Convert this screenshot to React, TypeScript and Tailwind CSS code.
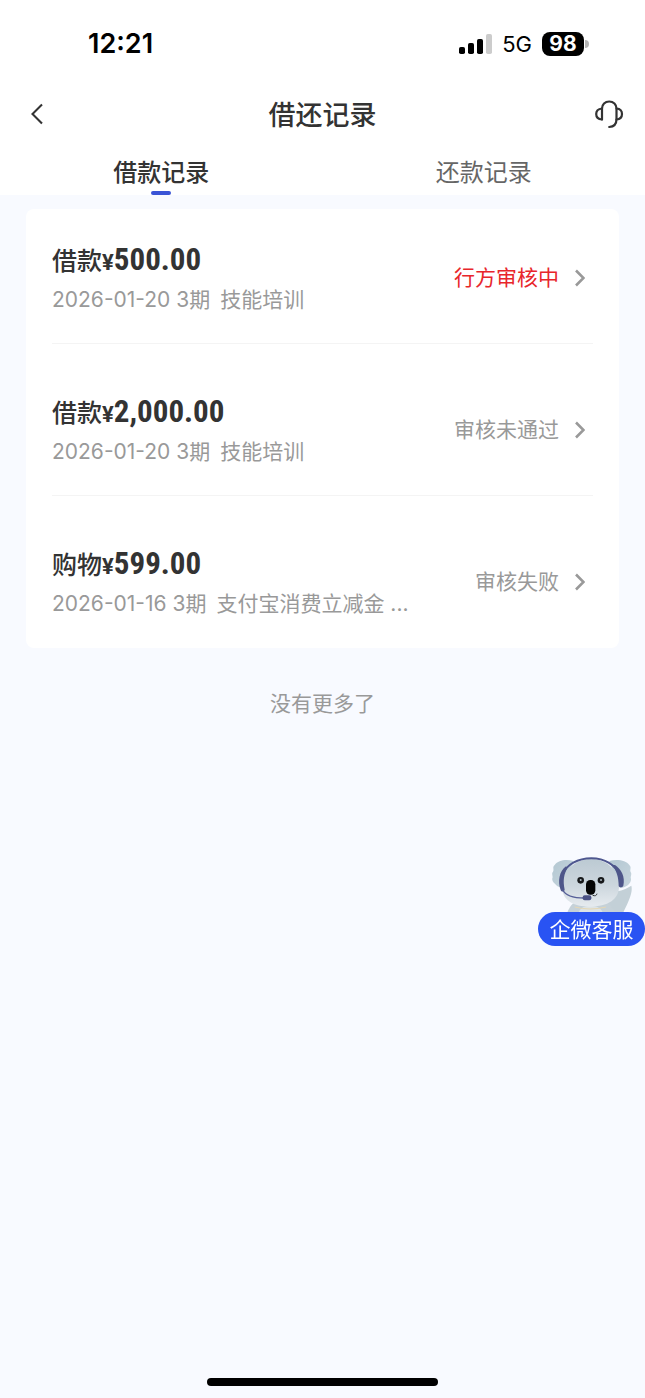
import React, { useState } from "react";
import clsx from "clsx";

type LoanRecord = {
  id: string;
  kind: string;
  amount: string;
  date: string;
  periods: string;
  purpose: string;
  status: string;
  highlight?: boolean;
};

const loanRecords: LoanRecord[] = [
  {
    id: "1",
    kind: "借款",
    amount: "500.00",
    date: "2026-01-20",
    periods: "3期",
    purpose: "技能培训",
    status: "行方审核中",
    highlight: true,
  },
  {
    id: "2",
    kind: "借款",
    amount: "2,000.00",
    date: "2026-01-20",
    periods: "3期",
    purpose: "技能培训",
    status: "审核未通过",
  },
  {
    id: "3",
    kind: "购物",
    amount: "599.00",
    date: "2026-01-16",
    periods: "3期",
    purpose: "支付宝消费立减金 ...",
    status: "审核失败",
  },
];

const tabs = [
  { key: "loan", label: "借款记录" },
  { key: "repay", label: "还款记录" },
];

function StatusBar() {
  return (
    <div className="flex h-22 items-center justify-between pr-14 pl-22 text-black">
      <span className="text-[27px] leading-8 font-semibold">12:21</span>
      <div className="flex items-center gap-2.5">
        <svg width="33" height="20" viewBox="0 0 33 20" aria-hidden="true">
          <rect x="0" y="13" width="6" height="7" rx="1.8" />
          <rect x="9" y="9" width="6" height="11" rx="1.8" />
          <rect x="18" y="5" width="6" height="15" rx="1.8" />
          <rect x="27" y="0" width="6" height="20" rx="1.8" fill="#cccccc" />
        </svg>
        <span className="text-[22px] leading-8">5G</span>
        <div className="flex items-center gap-px">
          <span className="flex h-6 w-[42px] items-center justify-center rounded-lg bg-black text-[21px] leading-6 font-bold text-white">
            98
          </span>
          <span className="h-2 w-1 rounded-r-full bg-[#b5b5b5]" />
        </div>
      </div>
    </div>
  );
}

function NavBar() {
  return (
    <header className="flex h-[52px] items-center justify-between px-5">
      <button type="button" aria-label="返回" className="flex w-8 justify-center">
        <svg width="16" height="24" viewBox="0 0 16 24" fill="none" aria-hidden="true">
          <path d="M14 2.500L4.500 12L14 21.500" stroke="#333333" strokeWidth="2.100" />
        </svg>
      </button>
      <h1 className="pt-1 text-[27px] leading-10 font-medium text-[#333333]">借还记录</h1>
      <button type="button" aria-label="客服" className="flex w-8 justify-center">
        <svg
          width="30"
          height="30"
          viewBox="0 0 30 30"
          fill="none"
          stroke="#333333"
          strokeWidth="2.200"
          strokeLinecap="round"
          aria-hidden="true"
        >
          <path d="M8 20.500V9.500C8 5.500 11 2.500 15.200 2.500C19.500 2.500 22.500 5.500 22.500 9.500V20C22.500 25 20 27.800 15.200 28" />
          <path d="M8 9.500C4.500 9.800 2.200 12 2.200 15C2.200 18 4.500 20.200 8 20.500" />
          <path d="M22.500 9.500C26 9.800 28 12 28 15C28 18 26 20.200 22.500 20.500" />
        </svg>
      </button>
    </header>
  );
}

function RecordRow({ record }: { record: LoanRecord }) {
  return (
    <li className="border-b border-[#f4f4f4] pt-[50px] pb-[29px] first:pt-[33px] last:border-transparent">
      <a href={`#record-${record.id}`} className="flex items-center justify-between">
        <div className="flex flex-col gap-2">
          <p className="flex h-9 items-baseline text-[#333333]">
            <span className="text-[25px] leading-9 font-medium">{record.kind}</span>
            <span className="font-['Roboto'] text-[22px] leading-9 font-bold">¥</span>
            <span className="font-['Roboto_Condensed','Roboto'] text-[31px] leading-9 font-bold">
              {record.amount}
            </span>
          </p>
          <p className="flex gap-2.5 text-[21px] leading-7 text-[#999999]">
            <span>
              {record.date} {record.periods}
            </span>
            <span>{record.purpose}</span>
          </p>
        </div>
        <div className="flex items-center gap-4 pr-2">
          <span
            className={clsx(
              "text-[21px] leading-7",
              record.highlight ? "text-[#e8262b]" : "text-[#999999]"
            )}
          >
            {record.status}
          </span>
          <svg width="10" height="18" viewBox="0 0 10 18" fill="none" aria-hidden="true">
            <path d="M1 1.500L8.500 9L1 16.500" stroke="#999999" strokeWidth="2.600" />
          </svg>
        </div>
      </a>
    </li>
  );
}

function Koala() {
  return (
    <svg width="80" height="55" viewBox="66 50 240 165" aria-hidden="true">
      <defs>
        <linearGradient id="koala-face" x1="0" y1="0" x2="0" y2="1">
          <stop offset="0" stopColor="#bccad3" />
          <stop offset="0.55" stopColor="#ccd6dd" />
          <stop offset="1" stopColor="#e6ebef" />
        </linearGradient>
        <linearGradient id="koala-ear" x1="0" y1="0" x2="1" y2="1">
          <stop offset="0" stopColor="#b3c7d2" />
          <stop offset="1" stopColor="#c8d6de" />
        </linearGradient>
      </defs>
      <path
        d="M250 152C272 154 288 146 304 136C309 154 298 180 280 216L216 216L232 182Z"
        fill="#c3d0d7"
      />
      <path
        d="M130 62C108 56 84 60 74 74C66 81 73 87 69 94C63 101 70 107 67 114C65 123 73 128 79 135C86 142 94 142 104 140Z"
        fill="url(#koala-ear)"
      />
      <path
        d="M238 62C262 56 288 60 298 74C306 82 298 88 302 95C307 102 300 108 303 115C304 127 292 141 270 143Z"
        fill="url(#koala-ear)"
      />
      <path d="M112 216C118 202 126 188 140 182H226C240 190 248 202 254 216Z" fill="#c5d1d8" />
      <path d="M146 216C152 202 162 197 181 197C200 197 212 202 218 216Z" fill="#dde4e6" />
      <path
        d="M183 56C230 56 266 88 267 138C268 178 232 199 181 199C130 199 96 180 97 140C98 88 138 56 183 56Z"
        fill="url(#koala-face)"
      />
      <path d="M134 200Q180 212 228 200" stroke="#e5d7b4" strokeWidth="3" fill="none" />
      <path
        d="M97 105C108 72 145 54 184 54C224 54 258 74 267 104"
        stroke="#4e578f"
        strokeWidth="6"
        fill="none"
      />
      <path
        d="M108 78C88 92 82 124 92 149C95 156 103 154 104 148C98 121 102 101 112 84Z"
        fill="#4e5689"
      />
      <path
        d="M247 75C260 91 266 112 266 137C268 143 277 142 280 136C286 110 274 86 255 74Z"
        fill="#4e5689"
      />
      <path
        d="M98 148C106 166 134 173 164 173"
        stroke="#565f98"
        strokeWidth="4"
        fill="none"
      />
      <rect x="158" y="165" width="26" height="15" rx="6" fill="#4b5285" />
      <circle cx="152" cy="120" r="10" fill="#17191b" />
      <circle cx="213" cy="120" r="10" fill="#17191b" />
      <circle cx="152" cy="119" r="3" fill="#aeb9c0" />
      <circle cx="213" cy="119" r="3" fill="#aeb9c0" />
      <rect x="168" y="119" width="28" height="44" rx="13" fill="#050505" />
      <path d="M188 165Q199 169 201 160" stroke="#303234" strokeWidth="3" fill="none" />
    </svg>
  );
}

function ServiceButton() {
  return (
    <button type="button" className="fixed top-[857px] right-0 flex flex-col items-center">
      <Koala />
      <span className="flex h-[34px] w-[107px] items-center justify-center rounded-full bg-[#2953f3] pt-0.5 text-[21px] leading-7 text-white">
        企微客服
      </span>
    </button>
  );
}

export default function App() {
  const [activeTab, setActiveTab] = useState("loan");

  return (
    <div className="flex min-h-screen flex-col bg-[#f8faff] font-['Inter','Noto_Sans_CJK_SC',sans-serif]">
      <div className="bg-white">
        <StatusBar />
        <NavBar />
        <div role="tablist" className="grid grid-cols-2">
          {tabs.map((tab) => {
            const active = tab.key === activeTab;
            return (
              <button
                key={tab.key}
                type="button"
                role="tab"
                aria-selected={active}
                onClick={() => setActiveTab(tab.key)}
                className="flex h-[55px] flex-col items-center justify-end"
              >
                <span
                  className={clsx(
                    "text-2xl leading-9",
                    active ? "font-medium text-[#333333]" : "text-[#666666]"
                  )}
                >
                  {tab.label}
                </span>
                <span className={clsx("h-1 w-5 rounded-full", active && "bg-[#3a54d6]")} />
              </button>
            );
          })}
        </div>
      </div>

      <main className="px-[26px] pt-3.5">
        <ul className="rounded-lg bg-white px-[26px]">
          {activeTab === "loan" &&
            loanRecords.map((record) => <RecordRow key={record.id} record={record} />)}
        </ul>
        <p className="pt-[42px] text-center text-[21px] leading-7 text-[#999999]">没有更多了</p>
      </main>

      <ServiceButton />

      <div className="mt-auto flex justify-center pb-3">
        <span className="h-2 w-[231px] rounded-full bg-black" />
      </div>
    </div>
  );
}
